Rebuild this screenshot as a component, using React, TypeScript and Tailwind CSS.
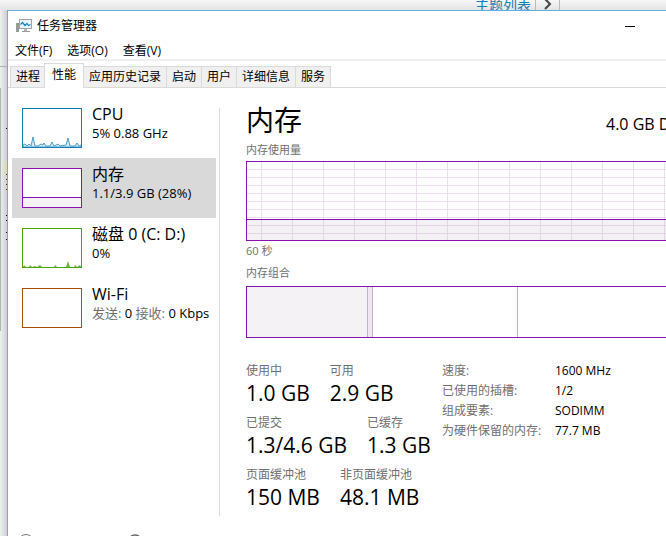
import { ReactNode } from 'react';
import clsx from 'clsx';

const menus = ['文件(F)', '选项(O)', '查看(V)'];

const tabs = ['进程', '性能', '应用历史记录', '启动', '用户', '详细信息', '服务'];

const statRows = [
  [
    { label: '使用中', value: '1.0 GB' },
    { label: '可用', value: '2.9 GB' },
  ],
  [
    { label: '已提交', value: '1.3/4.6 GB' },
    { label: '已缓存', value: '1.3 GB' },
  ],
  [
    { label: '页面缓冲池', value: '150 MB' },
    { label: '非页面缓冲池', value: '48.1 MB' },
  ],
];

const details = [
  { label: '速度:', value: '1600 MHz' },
  { label: '已使用的插槽:', value: '1/2' },
  { label: '组成要素:', value: 'SODIMM' },
  { label: '为硬件保留的内存:', value: '77.7 MB' },
];

function AppIcon() {
  return (
    <svg width="16" height="16" viewBox="0 0 16 16" aria-hidden="true">
      <rect x="0" y="5" width="3" height="9" fill="#9a9a9a" />
      <rect x="1" y="6" width="1" height="1" fill="#4fc04f" />
      <rect x="3.5" y="1.5" width="12" height="9" fill="#e9f4fa" stroke="#a3a3a3" />
      <path d="M4.5 6.5 L6.5 4.5 L9 7.5 L11 5.5 L12.5 7.5 L14.5 6.5" fill="none" stroke="#1583c0" strokeWidth="1.2" />
      <rect x="8" y="11" width="3" height="2" fill="#b5b5b5" />
      <rect x="6" y="13" width="8" height="1" fill="#9a9a9a" />
    </svg>
  );
}

// Small 60x40 preview shown next to every device
function Thumb({ color, children }: { color: string; children?: ReactNode }) {
  return (
    <svg width="60" height="40" viewBox="0 0 60 40" className="shrink-0" aria-hidden="true">
      <rect x="0.5" y="0.5" width="59" height="39" fill="#fff" />
      {children}
      <rect x="0.5" y="0.5" width="59" height="39" fill="none" stroke={color} />
    </svg>
  );
}

interface DeviceProps {
  name: string;
  info: ReactNode;
  thumb: ReactNode;
  active?: boolean;
}

function Device({ name, info, thumb, active }: DeviceProps) {
  return (
    <button type="button" className={clsx('flex h-15 w-full gap-2.5 px-2.5 pt-2.5 text-left', active && 'bg-[#d9d9d9]')}>
      {thumb}
      <span className="-mt-1 flex flex-col whitespace-nowrap">
        <span className="text-base leading-5">{name}</span>
        <span className="text-[13px] leading-[18px]">{info}</span>
      </span>
    </button>
  );
}

function UsageChart() {
  return (
    <svg width="100%" height="80" className="block" role="img" aria-label="内存使用量">
      <defs>
        <pattern id="usage-grid" x="15" y="8" width="31" height="8" patternUnits="userSpaceOnUse">
          <rect width="31" height="1" fill="#ecdff0" />
          <rect width="1" height="8" fill="#ecdff0" />
        </pattern>
      </defs>
      <rect width="100%" height="80" fill="url(#usage-grid)" />
      <rect y="58" width="100%" height="22" fill="#94789b" fillOpacity="0.1" />
      <rect y="58" width="100%" height="1" fill="#8b12ae" />
      <rect width="100%" height="1" fill="#8b12ae" />
      <rect y="79" width="100%" height="1" fill="#8b12ae" />
      <rect width="1" height="80" fill="#8b12ae" />
    </svg>
  );
}

export default function App() {
  return (
    <div className="flex h-screen flex-col overflow-hidden bg-[#eeeeee] font-['Open_Sans','Noto_Sans_CJK_SC',sans-serif] text-xs text-black">
      {/* Page behind the window */}
      <div className="flex h-2.5 shrink-0 items-center justify-end overflow-hidden bg-linear-to-b from-[#f7f7f7] to-[#e4e4e4] pr-[106px]">
        <a href="#list" className="pr-1 text-sm leading-5 text-[#0f7fb0]">主题列表</a>
        <span className="flex h-2.5 w-[25px] items-center justify-center border-x border-[#b9b9b9]">
          <svg width="8" height="14" viewBox="0 0 8 14" fill="none" stroke="#444" strokeWidth="2" aria-hidden="true">
            <path d="M1 1 L6 6 L1 11" />
          </svg>
        </span>
      </div>

      <div className="flex min-h-0 flex-1">
        <svg width="7" height="526" className="shrink-0 bg-linear-to-r from-[#f0f0f0] to-[#cfcfcf]" aria-hidden="true">
          <rect y="56" width="7" height="1" fill="#b0b0b0" />
          <rect y="78" width="1" height="243" fill="#b4b4b4" />
          <rect x="6" y="153" width="1" height="9" fill="#e5dc9a" />
          <path d="M6 118h1v1h-1zM6 205h1v1h-1zM6 210h1v1h-1zM6 222h1v1h-1zM6 229h1v1h-1z" fill="#111" />
          <path d="M6 164h1v1h-1zM6 169h1v1h-1zM6 174h1v1h-1zM6 179h1v1h-1z" fill="#7a2418" />
        </svg>

        <div className="flex min-w-0 flex-1 flex-col border-t border-l border-[#5fb1de] bg-white">
          <header className="flex h-[30px] shrink-0 items-center pr-[13px] pl-2">
            <AppIcon />
            <h1 className="ml-[5px] text-xs">任务管理器</h1>
            <button type="button" aria-label="最小化" className="ml-auto flex h-[30px] w-[46px] items-center justify-center">
              <span className="h-px w-2.5 bg-black" />
            </button>
          </header>

          <nav className="flex h-5 shrink-0 items-end gap-[15px] border-b-2 border-[#f0f0f0] px-[7px]">
            {menus.map((menu) => (
              <button key={menu} type="button" className="leading-4">{menu}</button>
            ))}
          </nav>

          <div role="tablist" className="flex h-[27px] shrink-0 items-end border-b border-[#dadada] pl-0.5">
            {tabs.map((tab) => (
              <button
                key={tab}
                type="button"
                role="tab"
                aria-selected={tab === '性能'}
                className={clsx(
                  'whitespace-nowrap border-[#dadada]',
                  tab === '性能'
                    ? '-mb-px -ml-px h-[25px] border-x border-t bg-white px-[7px] pb-0.5'
                    : 'h-[21px] border-t border-r bg-[#f0f0f0] px-[5px] first:border-l first:border-r-0'
                )}
              >
                {tab}
              </button>
            ))}
          </div>

          <div className="flex min-h-0 flex-1 pt-2.5">
            {/* Device list */}
            <aside className="w-[208px] shrink-0 pl-1">
              <Device
                name="CPU"
                info="5%  0.88 GHz"
                thumb={
                  <Thumb color="#117dbb">
                    <path
                      d="M1 37 L3 36 L5 38 L7 36 L9 38 L11 29 L13 38 L16 38 L19 36 L21 37 L22 35 L24 38 L28 38 L30 34 L32 38 L36 36 L38 38 L44 37 L46 30 L48 38 L53 38 L55 35 L57 38 L59 37 V39 H1 Z"
                      fill="#d6e9f4"
                      stroke="#4b9ccb"
                    />
                  </Thumb>
                }
              />
              <Device
                name="内存"
                info="1.1/3.9 GB (28%)"
                active
                thumb={
                  <Thumb color="#8b12ae">
                    <rect x="1" y="29" width="58" height="10" fill="#f4f2f4" />
                    <rect x="1" y="29" width="58" height="1" fill="#8b12ae" />
                  </Thumb>
                }
              />
              <Device
                name="磁盘 0 (C: D:)"
                info="0%"
                thumb={
                  <Thumb color="#4da60c">
                    <path
                      d="M1 39 L2 37 L4 39 L7 39 L8 37 L10 39 L13 38 L15 39 L18 37 L20 39 L32 39 L33 37 L35 39 L44 39 L46 33 L48 39 L52 39 L53 37 L55 39 L58 37 L59 39 Z"
                      fill="#6fb83d"
                    />
                  </Thumb>
                }
              />
              <Device
                name="Wi-Fi"
                info={
                  <>
                    <span className="text-[#707070]">发送:</span> 0 <span className="text-[#707070]">接收:</span> 0 Kbps
                  </>
                }
                thumb={<Thumb color="#a74f01" />}
              />
            </aside>

            {/* Memory details */}
            <main className="mt-2.5 ml-[3px] h-[408px] min-w-0 flex-1 border-l border-[#dadada] pl-[26px]">
              <div className="flex h-[34px] items-start justify-between">
                <h2 className="-mt-2 text-[28px] leading-10">内存</h2>
                <p className="mt-1 w-15 overflow-hidden text-base leading-6 whitespace-nowrap">4.0 GB DDR3</p>
              </div>
              <p className="pb-[3px] text-[11px] leading-4 text-[#707070]">内存使用量</p>
              <UsageChart />
              <p className="mt-0.5 text-[11px] leading-4 text-[#707070]">60 秒</p>
              <p className="mt-1.5 mb-[5px] text-[11px] leading-4 text-[#707070]">内存组合</p>
              <div className="flex h-[52px] border-y border-l border-[#8b12ae]">
                <div className="w-[121px] border-r border-[#c9a9d6] bg-[#f4f2f4]" />
                <div className="w-[5px] border-r border-[#c9a9d6] bg-[#eee6f1]" />
                <div className="w-[145px] border-r border-[#c9a9d6]" />
              </div>

              <div className="mt-[23px] flex">
                <div className="flex w-[196px] shrink-0 flex-col gap-2">
                  {statRows.map((row) => (
                    <dl key={row[0].label} className="flex gap-5 whitespace-nowrap">
                      {row.map((stat) => (
                        <div key={stat.label}>
                          <dt className="leading-5 text-[#707070]">{stat.label}</dt>
                          <dd className="text-[21px] leading-6">{stat.value}</dd>
                        </div>
                      ))}
                    </dl>
                  ))}
                </div>
                <dl className="grid auto-rows-[20px] grid-cols-[113px_auto] content-start leading-5 whitespace-nowrap">
                  {details.map((item) => (
                    <div key={item.label} className="contents">
                      <dt className="text-[#707070]">{item.label}</dt>
                      <dd>{item.value}</dd>
                    </div>
                  ))}
                </dl>
              </div>
            </main>
          </div>

          <footer className="-mt-0.5 flex h-0.5 shrink-0 items-start gap-[93px] overflow-hidden pl-2.5">
            <button type="button" aria-label="简略信息">
              <svg width="16" height="16" viewBox="0 0 16 16" fill="none" stroke="#777" aria-hidden="true">
                <circle cx="8" cy="8" r="7.5" />
                <path d="M4.5 9.5 L8 6 L11.5 9.5" />
              </svg>
            </button>
            <button type="button" aria-label="打开资源监视器">
              <svg width="16" height="16" viewBox="0 0 16 16" fill="none" stroke="#666" aria-hidden="true">
                <circle cx="8" cy="8" r="7" strokeWidth="1.5" />
              </svg>
            </button>
          </footer>
        </div>
      </div>
    </div>
  );
}
